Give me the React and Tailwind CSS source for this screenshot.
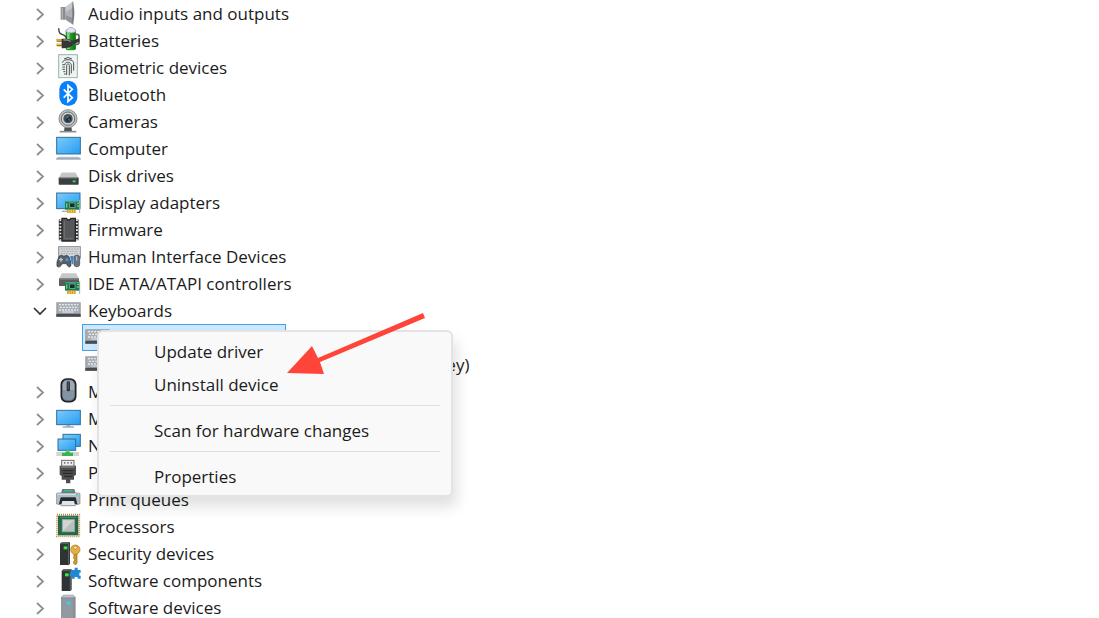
import React, { useState } from 'react';

const Speaker = () => (
  <>
    <rect x="14" y="21" width="15" height="38" fill="#878b90" />
    <rect x="17" y="23" width="4" height="34" fill="#b0b4b8" />
    <path d="M29 21 L52 4 V74 L29 59 Z" fill="#aeb2b6" />
    <path d="M29 21 L52 4 V22 L29 36 Z" fill="#c6cacd" />
    <path d="M29 46 L52 55 V74 L29 59 Z" fill="#90959a" />
    <path d="M49 4 C57 20 57 58 49 74 Z" fill="#747a80" />
  </>
);

const Battery = () => (
  <>
    <path d="M57 22 h7 q5 0 5 6 v18 q0 6 -6 6 h-6" fill="none" stroke="#5d6660" strokeWidth="5" />
    <rect x="29" y="8" width="31" height="62" rx="6" fill="#259327" />
    <rect x="33" y="14" width="8" height="52" fill="#76d875" />
    <rect x="50" y="14" width="8" height="52" fill="#167c20" />
    <path d="M29 14 q0 -8 8 -9 q2 -4 8 -4 q6 0 7 4 q8 1 8 9 q-15 8 -31 0" fill="#e3e4f2" stroke="#8a8ca2" strokeWidth="2" />
    <path d="M8 4 C9 24 15 19 25 25 C36 31 28 37 34 43" fill="none" stroke="#353835" strokeWidth="4" />
    <path d="M2 40 h17 M2 54 h17" stroke="#7d6211" strokeWidth="8" />
    <path d="M2 39 h17 M2 53 h17" stroke="#f2c22e" strokeWidth="4" />
    <path d="M17 35 h11 q15 0 20 6 l22 -7 v10 l-18 8 q-7 13 -35 12 Z" fill="#343636" />
    <path d="M22 39 h9 q9 0 13 5" fill="none" stroke="#868986" strokeWidth="4" />
  </>
);

const Fingerprint = () => (
  <>
    <rect x="8" y="2" width="56" height="69" fill="#edf3f2" stroke="#95b4ad" strokeWidth="3" />
    <g fill="none" stroke="#4b5250" strokeWidth="3">
      <path d="M24 15 Q36 6 48 15" />
      <path d="M19 26 C22 14 50 14 53 26 V50" />
      <path d="M19 32 H27 C25 22 46 22 46 34 V58" />
      <path d="M19 39 H27 M19 46 H27 M22 53 H28 M24 60 H29" />
      <path d="M32 63 V35 C32 28 40 28 40 35 V64" />
    </g>
  </>
);

const Bluetooth = () => (
  <>
    <rect x="10" y="0" width="54" height="74" rx="25" fill="#087ffb" />
    <path d="M23 25 L49 50 L36 62 V13 L49 25 L23 50" fill="none" stroke="#fff" strokeWidth="5" />
  </>
);

const Camera = () => (
  <>
    <path d="M26 57 h20 l2 12 h-24 Z" fill="#4c4f50" />
    <path d="M11 71 h50" stroke="#8b8e8f" strokeWidth="5" />
    <circle cx="36" cy="32" r="27" fill="#bfc1c1" stroke="#8a8d8e" strokeWidth="3" />
    <circle cx="36" cy="32" r="20" fill="#d5d7d7" stroke="#666b6d" strokeWidth="3" />
    <circle cx="36" cy="32" r="14" fill="#4a5155" />
    <circle cx="37" cy="33" r="8" fill="#142d3e" />
    <path d="M32 31 q1 -5 6 -5" stroke="#82b0cc" strokeWidth="3" fill="none" />
    <circle cx="39" cy="35" r="3" fill="#3d7397" />
  </>
);

const Computer = () => (
  <>
    <rect x="2" y="7" width="71" height="50" fill="url(#screen)" stroke="#326f99" strokeWidth="3" />
    <path d="M7 65 H67 L74 70 V73 H1 V70 Z" fill="#b1bfca" />
    <path d="M1 72 H74" stroke="#8898a7" strokeWidth="3" />
  </>
);

const Disk = () => (
  <>
    <path d="M17 32 H59 L68 48 H8 Z" fill="#c3c5c6" />
    <path d="M17 32 H59" stroke="#dedfe0" strokeWidth="3" />
    <rect x="8" y="47" width="60" height="21" rx="2" fill="#3b3e40" />
    <path d="M9 48 H67" stroke="#77797b" strokeWidth="3" />
    <rect x="50" y="55" width="9" height="6" fill="#24e53c" />
  </>
);

const Card = () => (
  <>
    <rect x="27" y="36" width="45" height="26" fill="#157a5b" />
    <path d="M28 38 H71" stroke="#48ad86" strokeWidth="3" />
    <rect x="41" y="42" width="16" height="13" fill="#172d28" stroke="#8ac7ad" strokeWidth="2" />
    <path d="M32 43 v13 M63 43 h6 M63 51 h6" stroke="#82c85c" strokeWidth="4" />
    <path d="M71 33 V72" stroke="#a3afb4" strokeWidth="3" />
    <rect x="33" y="62" width="26" height="10" fill="#e39b16" />
    <path d="M39 63 v9 M46 63 v9 M53 63 v9" stroke="#f6d35a" strokeWidth="3" />
  </>
);

const Display = () => (
  <>
    <rect x="2" y="12" width="70" height="47" fill="url(#screen)" stroke="#326f99" strokeWidth="3" />
    <path d="M18 67 h20" stroke="#9dafbb" strokeWidth="4" />
    <Card />
  </>
);

const Firmware = () => (
  <>
    <path d="M14 10 V73 M62 10 V73" stroke="#303030" strokeWidth="11" />
    <path d="M14 10 V73 M62 10 V73" stroke="#e8e8e8" strokeWidth="7" strokeDasharray="5 5" />
    <path d="M18 7 H31 Q38 17 45 7 H58 V75 H18 Z" fill="#555759" stroke="#242627" strokeWidth="4" />
    <path d="M25 15 V68 H51" stroke="#6f7275" strokeWidth="3" fill="none" />
  </>
);

const Hid = () => (
  <>
    <rect x="8" y="11" width="65" height="34" fill="#d4d7d9" stroke="#8b8f92" strokeWidth="3" />
    <path d="M14 18 H68 M17 25 H66 M14 32 H68" stroke="#8b9094" strokeWidth="2" strokeDasharray="5 3" />
    <path d="M10 39 Q17 34 24 40 Q31 34 38 40 Q45 52 45 68 Q38 78 31 62 H19 Q11 77 3 70 Q0 57 10 39" fill="#596168" stroke="#30363a" strokeWidth="2" />
    <path d="M9 50 h12 M15 44 v12" stroke="#c3cace" strokeWidth="4" />
    <circle cx="33" cy="50" r="5" fill="#3e97df" />
    <path d="M43 39 H52 V64 H47 Z" fill="#3987c9" />
    <rect x="54" y="37" width="17" height="34" rx="7" fill="#6b757e" stroke="#3d454b" strokeWidth="2" />
    <path d="M62 40 V53" stroke="#c4ccd3" strokeWidth="3" />
  </>
);

const Ide = () => (
  <>
    <path d="M18 10 H60 L69 26 H9 Z" fill="#c5c7c8" />
    <rect x="9" y="25" width="60" height="23" rx="2" fill="#595c5e" />
    <path d="M10 27 H68" stroke="#8c8e8f" strokeWidth="3" />
    <Card />
  </>
);

const Keyboard = () => (
  <>
    <rect x="1" y="16" width="73" height="44" fill="#8b9299" />
    <rect x="4" y="18" width="67" height="30" fill="#a9afb5" />
    <path d="M9 23 H67 M12 31 H67 M9 39 H67" stroke="#e6e9eb" strokeWidth="4" strokeDasharray="6 3" />
    <path d="M19 45 H54" stroke="#e4e7e9" strokeWidth="3" />
    <rect x="1" y="51" width="73" height="8" fill="#474c51" />
  </>
);

const Mouse = () => (
  <>
    <rect x="16" y="3" width="43" height="68" rx="16" fill="#69798a" stroke="#202326" strokeWidth="5" />
    <path d="M20 19 Q22 7 37 7 Q53 7 55 19 V37 H20 Z" fill="#9dabb8" />
    <path d="M20 37 H55 V53 Q51 67 37 67 Q23 67 20 53 Z" fill="#8494a3" />
    <rect x="32" y="10" width="10" height="30" rx="4" fill="#303338" />
    <path d="M37 13 V33" stroke="#596068" strokeWidth="3" />
  </>
);

const Monitor = () => (
  <>
    <rect x="2" y="16" width="71" height="43" fill="url(#screen)" stroke="#326f99" strokeWidth="3" />
    <path d="M31 60 H43 V64 H54 V68 H20 V64 H31 Z" fill="#a0afba" />
  </>
);

const Network = () => (
  <>
    <rect x="21" y="7" width="52" height="36" fill="url(#screen)" stroke="#2b709d" strokeWidth="3" />
    <rect x="6" y="21" width="53" height="34" fill="url(#screen)" stroke="#2b709d" strokeWidth="3" />
    <rect x="1" y="60" width="68" height="12" fill="#d1d4d2" />
    <path d="M29 56 H41 V62 H51 V72 H18 V62 H29 Z" fill="#36b64a" />
    <path d="M30 57 H40" stroke="#86e37d" strokeWidth="3" />
  </>
);

const Port = () => (
  <>
    <rect x="17" y="4" width="37" height="18" fill="#ededed" stroke="#6b6b6b" strokeWidth="3" />
    <path d="M24 9 h4 v5 h-4 Z M34 9 h4 v5 h-4 Z M44 9 h4 v5 h-4 Z" fill="#747474" />
    <path d="M11 20 H60 V47 L54 51 V62 H43 V73 H30 V62 H17 V51 L11 47 Z" fill="#4c4c4c" />
    <path d="M15 24 H56" stroke="#888" strokeWidth="4" />
    <path d="M20 35 H51 M20 43 H51 M24 52 H48" stroke="#252525" strokeWidth="3" />
  </>
);

const Printer = () => (
  <>
    <path d="M19 9 H55 L60 25 H14 Z" fill="#6d777e" />
    <path d="M24 14 H50" stroke="#29c977" strokeWidth="4" />
    <rect x="1" y="21" width="71" height="34" rx="4" fill="#b3bdc5" stroke="#788590" strokeWidth="2" />
    <path d="M4 25 H69" stroke="#d5dce1" strokeWidth="4" />
    <path d="M14 34 H59 L64 55 H9 Z" fill="#252b2f" />
    <path d="M19 45 H54 L58 59 H15 Z" fill="#dfe5e8" />
    <path d="M14 59 H59" stroke="#89959c" strokeWidth="3" />
    <rect x="60" y="24" width="7" height="4" fill="#42d48b" />
  </>
);

const Processor = () => (
  <>
    <rect x="3" y="5" width="67" height="65" fill="none" stroke="#b48b31" strokeWidth="5" strokeDasharray="3 3" />
    <rect x="6" y="8" width="61" height="59" fill="#28664c" />
    <path d="M12 13 H61" stroke="#46866a" strokeWidth="4" />
    <rect x="19" y="20" width="36" height="36" fill="#d2d5d3" stroke="#8faf9f" strokeWidth="3" />
    <path d="M21 54 L53 22 V54 Z" fill="#b9bebb" />
  </>
);

const Security = () => (
  <>
    <path d="M12 11 L17 7 H42 V71 L38 75 H12 Z" fill="#303335" />
    <path d="M13 11 H38 V73" fill="none" stroke="#626568" strokeWidth="3" />
    <rect x="23" y="19" width="11" height="9" fill="#30ed35" />
    <path d="M55 36 H63 V70 L58 75 L53 70 V64 L57 60 L53 55 Z" fill="#d39a28" stroke="#986718" strokeWidth="2" />
    <circle cx="58" cy="29" r="14" fill="#e2b047" stroke="#ae7819" strokeWidth="2" />
    <circle cx="58" cy="23" r="5" fill="#fff0ba" stroke="#a7761f" strokeWidth="2" />
  </>
);

const Component = () => (
  <>
    <path d="M17 11 L22 7 H47 V68 L43 72 H17 Z" fill="#303335" />
    <path d="M18 11 H43 V70" fill="none" stroke="#626568" strokeWidth="3" />
    <rect x="27" y="19" width="11" height="9" fill="#30ed35" />
    <path d="M47 9 H56 V2 H65 V9 H74 V17 H70 V26 H74 V35 H65 V30 H56 V35 H47 V27 H41 V17 H47 Z" fill="#1f88d2" />
  </>
);

const SoftwareDevice = () => (
  <>
    <path d="M15 10 L23 2 H51 L59 10 V72 H15 Z" fill="#9299a1" />
    <path d="M17 11 L24 4 H50 L57 11 Z" fill="#bdc3c8" />
    <path d="M16 12 H58 M54 13 V71" stroke="#777f87" strokeWidth="2" />
    <rect x="32" y="23" width="11" height="9" fill="#28d6f2" />
  </>
);

const devices = [
  { name: 'Audio inputs and outputs', icon: Speaker },
  { name: 'Batteries', icon: Battery },
  { name: 'Biometric devices', icon: Fingerprint },
  { name: 'Bluetooth', icon: Bluetooth },
  { name: 'Cameras', icon: Camera },
  { name: 'Computer', icon: Computer },
  { name: 'Disk drives', icon: Disk },
  { name: 'Display adapters', icon: Display },
  { name: 'Firmware', icon: Firmware },
  { name: 'Human Interface Devices', icon: Hid },
  { name: 'IDE ATA/ATAPI controllers', icon: Ide },
  {
    name: 'Keyboards',
    icon: Keyboard,
    children: ['HID Keyboard Device', 'PC/AT Enhanced PS/2 Keyboard (101/84-Key)'],
  },
  { name: 'Mice and other pointing devices', icon: Mouse },
  { name: 'Monitors', icon: Monitor },
  { name: 'Network adapters', icon: Network },
  { name: 'Ports (COM & LPT)', icon: Port },
  { name: 'Print queues', icon: Printer },
  { name: 'Processors', icon: Processor },
  { name: 'Security devices', icon: Security },
  { name: 'Software components', icon: Component },
  { name: 'Software devices', icon: SoftwareDevice },
];

const menuGroups = [['Update driver', 'Uninstall device'], ['Scan for hardware changes'], ['Properties']];

// Drawn on a grid of three units per pixel
const DeviceIcon = ({ icon: Icon }) => (
  <svg viewBox="0 0 75 81" className="h-[27px] w-[25px] shrink-0" aria-hidden="true">
    <Icon />
  </svg>
);

const Chevron = ({ open }) => (
  <svg viewBox="0 0 14 27" className="h-[27px] w-[14px]" fill="none" strokeWidth="1.7" aria-hidden="true">
    {open ? <path d="M1 11 L7 17 L13 11" stroke="#333" /> : <path d="M4 9 L10 14.5 L4 20" stroke="#8c8c8c" />}
  </svg>
);

const App = () => {
  const [open, setOpen] = useState({ Keyboards: true });
  const [selected, setSelected] = useState('HID Keyboard Device');
  const [showMenu, setShowMenu] = useState(true);

  const toggle = (name) => setOpen({ ...open, [name]: !open[name] });

  return (
    <main className="relative h-screen overflow-hidden bg-white font-['Open_Sans','Noto_Sans',sans-serif] text-[17px] leading-[27px] text-[#1b1b1b]">
      <svg className="absolute h-0 w-0" aria-hidden="true">
        <defs>
          <linearGradient id="screen" x1="0" y1="0" x2="1" y2="1">
            <stop offset="0" stopColor="#7ccbfb" />
            <stop offset="1" stopColor="#259df2" />
          </linearGradient>
        </defs>
      </svg>

      <ul className="pl-[33px]">
        {devices.map((device) => (
          <li key={device.name}>
            <div className="flex h-[27px] items-center whitespace-nowrap">
              <button type="button" aria-label={device.name} aria-expanded={!!open[device.name]} onClick={() => toggle(device.name)} className="mr-[9px]">
                <Chevron open={open[device.name]} />
              </button>
              <DeviceIcon icon={device.icon} />
              <span className="ml-[7px]">{device.name}</span>
            </div>
            {device.children && open[device.name] && (
              <ul className="pl-[49px]">
                {device.children.map((child) => (
                  <li key={child} className="flex">
                    <button
                      type="button"
                      onClick={() => setSelected(child)}
                      onContextMenu={(e) => { e.preventDefault(); setSelected(child); setShowMenu(true); }}
                      className={child === selected
                        ? 'flex h-[27px] min-w-[204px] items-center border border-[#4a9fe0] bg-[#cce8ff] pl-[2px] whitespace-nowrap'
                        : 'flex h-[27px] items-center border border-transparent pl-[2px] whitespace-nowrap'}
                    >
                      <DeviceIcon icon={Keyboard} />
                      <span className="ml-[6px]">{child}</span>
                    </button>
                  </li>
                ))}
              </ul>
            )}
          </li>
        ))}
      </ul>

      {showMenu && (
        <div role="menu" className="absolute top-[330px] left-[97px] w-[356px] rounded-md border-2 border-[#e3e3e3] bg-[#f9f9f9] pt-[3px] pb-[2px] shadow-[4px_10px_14px_rgba(0,0,0,0.12)]">
          {menuGroups.map((group, i) => (
            <React.Fragment key={group[0]}>
              {i > 0 && <hr className="mx-[11px] mt-1 mb-2 border-[#dfdfdf]" />}
              {group.map((item) => (
                <button key={item} type="button" role="menuitem" onClick={() => setShowMenu(false)} className="block h-[33px] w-full pl-[55px] text-left hover:bg-[#f0f0f0]">
                  {item}
                </button>
              ))}
            </React.Fragment>
          ))}
        </div>
      )}

      <svg viewBox="0 0 140 62" className="pointer-events-none absolute top-[313px] left-[286px] h-[62px] w-[140px]" aria-hidden="true">
        <path d="M137 0 L139 5 L34 49 L38 61 L1 60 L26 33 L32 45 Z" fill="#ff4539" />
      </svg>
    </main>
  );
};

export default App;
